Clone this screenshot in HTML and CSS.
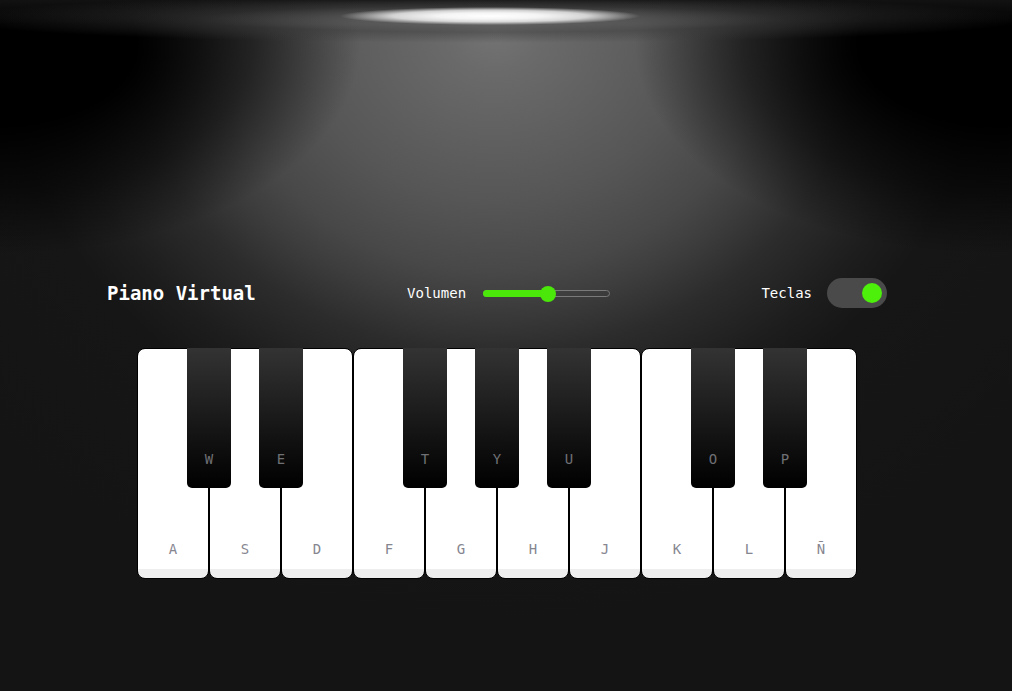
FILE: index.html
```html
<!DOCTYPE html>
<html lang="es">
<head>
<meta charset="utf-8">
<title>Piano Virtual</title>
<link rel="stylesheet" href="styles.css">
</head>
<body>
<div class="stage">
  <div class="wrapper">
    <header class="header">
      <h2 class="title">Piano Virtual</h2>
      <div class="column volume">
        <span class="label">Volumen</span>
        <div class="slider">
          <div class="slider-fill"></div>
          <div class="slider-thumb"></div>
        </div>
      </div>
      <div class="column keys-toggle">
        <span class="label">Teclas</span>
        <div class="switch"><div class="knob"></div></div>
      </div>
    </header>
    <ul class="piano-keys">
      <li class="key white"><span>a</span></li>
      <li class="key black"><span>w</span></li>
      <li class="key white"><span>s</span></li>
      <li class="key black"><span>e</span></li>
      <li class="key white"><span>d</span></li>
      <li class="key white"><span>f</span></li>
      <li class="key black"><span>t</span></li>
      <li class="key white"><span>g</span></li>
      <li class="key black"><span>y</span></li>
      <li class="key white"><span>h</span></li>
      <li class="key black"><span>u</span></li>
      <li class="key white"><span>j</span></li>
      <li class="key white"><span>k</span></li>
      <li class="key black"><span>o</span></li>
      <li class="key white"><span>l</span></li>
      <li class="key black"><span>p</span></li>
      <li class="key white"><span>ñ</span></li>
    </ul>
  </div>
</div>
</body>
</html>
```
FILE: styles.css
```css
* {
  margin: 0;
  padding: 0;
  box-sizing: border-box;
}

html, body {
  width: 1012px;
  height: 691px;
  overflow: hidden;
}

body {
  font-family: "DejaVu Sans Mono", "Liberation Mono", monospace;
  background-color: #141414;
  background-image:
    radial-gradient(ellipse 150px 9px at 490px 16px, #ffffff 0%, #f4f4f4 35%, rgba(255,255,255,0.75) 65%, rgba(255,255,255,0) 100%),
    radial-gradient(ellipse 540px 24px at 490px 19px, rgba(100,100,100,0.85) 0%, rgba(60,60,60,0.5) 55%, rgba(40,40,40,0) 100%),
    linear-gradient(to bottom, rgba(18,18,18,1) 0px, rgba(18,18,18,0) 24px),
    radial-gradient(ellipse 360px 210px at 0px 45px, rgba(0,0,0,1) 0%, rgba(0,0,0,1) 38%, rgba(0,0,0,0.55) 70%, rgba(0,0,0,0) 100%),
    radial-gradient(ellipse 360px 210px at 995px 45px, rgba(0,0,0,1) 0%, rgba(0,0,0,1) 38%, rgba(0,0,0,0.55) 70%, rgba(0,0,0,0) 100%),
    radial-gradient(ellipse 490px 430px at 495px 30px, #747474 0%, #6a6a6a 10%, #5e5e5e 28%, #565656 40%, #484848 56%, #3d3d3d 64%, #2c2c2c 75%, #1d1d1d 90%, #161616 100%, #141414 140%);
}

.stage {
  padding-right: 18px;
  padding-top: 278px;
}

.wrapper {
  width: 780px;
  margin: 0 auto;
}

.header {
  display: flex;
  align-items: center;
  justify-content: space-between;
  height: 30px;
  color: #fff;
}

.title {
  font-size: 19px;
  font-weight: bold;
  color: #fff;
}

.column {
  display: flex;
  align-items: center;
}

.label {
  font-size: 14px;
  color: #fff;
}

.volume .label {
  margin-right: 17px;
}

.keys-toggle .label {
  margin-right: 15px;
}

.slider {
  position: relative;
  width: 127px;
  height: 7px;
  border: 1px solid #7a7a7a;
  border-radius: 4px;
}

.slider-fill {
  position: absolute;
  left: -1px;
  top: -1px;
  width: 66px;
  height: 7px;
  border-radius: 4px;
  background: #4be60a;
}

.slider-thumb {
  position: absolute;
  left: 56px;
  top: -5px;
  width: 16px;
  height: 16px;
  border-radius: 50%;
  background: #4be60a;
}

.switch {
  width: 60px;
  height: 30px;
  border-radius: 15px;
  background: #4a4a4a;
  display: flex;
  align-items: center;
  justify-content: flex-end;
  padding-right: 5px;
}

.knob {
  width: 20px;
  height: 20px;
  border-radius: 50%;
  background: #4cf00a;
}

.piano-keys {
  display: flex;
  list-style: none;
  width: 720px;
  margin: 40px auto 0;
}

.key {
  position: relative;
  text-transform: uppercase;
}

.key span {
  position: absolute;
  bottom: 20px;
  width: 100%;
  text-align: center;
  font-size: 14px;
  line-height: 17px;
}

.white {
  width: 72px;
  height: 231px;
  border: 1px solid #000;
  border-radius: 8px;
  background: linear-gradient(#fff 96%, #eee 4%);
}

.white span {
  color: #868690;
}

.black {
  z-index: 2;
  width: 44px;
  height: 140px;
  margin: 0 -22px;
  border-radius: 0 0 5px 5px;
  background: linear-gradient(#333, #000);
}

.black span {
  color: #6f7074;
}
```
